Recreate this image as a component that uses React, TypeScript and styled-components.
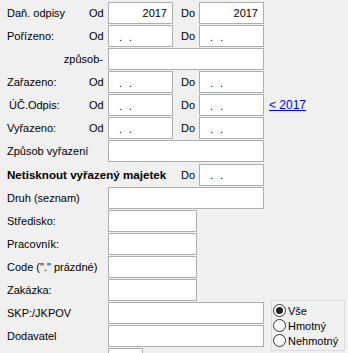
import React from 'react'
import styled, { createGlobalStyle } from 'styled-components'

const GlobalStyle = createGlobalStyle`
	html, body {
		margin: 0;
		padding: 0;
		background: #f0f0f0;
	}
	body {
		font-family: "Liberation Sans", Arial, sans-serif;
		font-size: 11px;
		color: #000;
	}
`

const Form = styled.div`
	padding-top: 2px;
	width: 348px;
	height: 353px;
	overflow: hidden;
`

const Row = styled.div<{ $tall?: boolean }>`
	display: grid;
	grid-template-columns: 89px 19px 65px 26px 65px auto;
	align-items: center;
	height: ${(p) => (p.$tall ? 23 : 22)}px;
	margin-bottom: 1px;
`

const Label = styled.div<{ $span?: number; $indent?: number; $bold?: boolean; $right?: boolean }>`
	grid-column: span ${(p) => p.$span ?? 1};
	padding-left: ${(p) => (p.$right ? 0 : p.$indent ?? 7)}px;
	padding-right: ${(p) => (p.$right ? 5 : 0)}px;
	text-align: ${(p) => (p.$right ? 'right' : 'left')};
	font-weight: ${(p) => (p.$bold ? 'bold' : 'normal')};
	font-size: ${(p) => (p.$bold ? '11.6px' : '11px')};
	white-space: nowrap;
`

const Suffix = styled.div<{ $pad?: number }>`
	text-align: right;
	padding-right: ${(p) => p.$pad ?? 5}px;
	white-space: nowrap;
`

const Field = styled.div<{ $span?: number; $width?: number; $align?: 'left' | 'right' }>`
	grid-column: span ${(p) => p.$span ?? 1};
	${(p) => (p.$width ? `width: ${p.$width}px; justify-self: start;` : '')}
	height: 22px;
	box-sizing: border-box;
	border: 1px solid #adadad;
	background: #fff;
	display: flex;
	align-items: center;
	justify-content: ${(p) => (p.$align === 'right' ? 'flex-end' : 'flex-start')};
	padding: 0 5px 0 10px;
	white-space: pre;
`

const DateMask = styled.span`
	letter-spacing: 2px;
	padding-top: 1px;
`

const YearLink = styled.a`
	padding-left: 5px;
	color: #0000ff;
	text-decoration: underline;
	font-size: 12px;
	white-space: nowrap;
	cursor: pointer;
`

const Bottom = styled.div`
	display: flex;
	align-items: flex-start;
`

const Stack = styled.div`
	width: 264px;
`

const RadioGroup = styled.div`
	margin-left: 7px;
	margin-top: -2px;
	width: 74px;
	height: 51px;
	box-sizing: border-box;
	border: 1px solid #dcdcdc;
	padding: 2px 1px;
	display: flex;
	flex-direction: column;
`

const RadioItem = styled.label`
	display: flex;
	align-items: center;
	gap: 2px;
	height: 15px;
	font-size: 11px;
	white-space: nowrap;
`

const RadioCircle = styled.span<{ $checked?: boolean }>`
	width: 13px;
	height: 13px;
	box-sizing: border-box;
	border: 1px solid #333;
	border-radius: 50%;
	background: #fff;
	display: flex;
	align-items: center;
	justify-content: center;
	flex-shrink: 0;
	&::after {
		content: '';
		display: ${(p) => (p.$checked ? 'block' : 'none')};
		width: 7px;
		height: 7px;
		border-radius: 50%;
		background: #222;
	}
`

const DateBox = () => (
	<Field>
		<DateMask>. .</DateMask>
	</Field>
)

const RangeRow = ({ label, indent, year, link }: { label: string; indent?: number; year?: string; link?: string }) => (
	<Row>
		<Label $indent={indent}>{label}</Label>
		<Suffix>Od</Suffix>
		{year ? <Field $align="right">{year}</Field> : <DateBox />}
		<Suffix $pad={4}>Do</Suffix>
		{year ? <Field $align="right">{year}</Field> : <DateBox />}
		{link && <YearLink>{link}</YearLink>}
	</Row>
)

const TextRow = ({ label, width }: { label: string; width?: number }) => (
	<Row>
		<Label $span={2}>{label}</Label>
		<Field $span={3} $width={width} />
	</Row>
)

const options = [
	{ label: 'Vše', checked: true },
	{ label: 'Hmotný' },
	{ label: 'Nehmotný' }
]

export default function App() {
	return (
		<>
			<GlobalStyle />
			<Form>
				<RangeRow label="Daň. odpisy" year="2017" />
				<RangeRow label="Pořízeno:" />
				<Row>
					<Label $span={2} $right>
						způsob-
					</Label>
					<Field $span={3} />
				</Row>
				<RangeRow label="Zařazeno:" />
				<RangeRow label="ÚČ.Odpis:" indent={9} link="< 2017" />
				<RangeRow label="Vyřazeno:" />
				<TextRow label="Způsob vyřazení" />
				<Row $tall>
					<Label $span={3} $bold>
						Netisknout vyřazený majetek
					</Label>
					<Suffix $pad={4}>Do</Suffix>
					<DateBox />
				</Row>
				<TextRow label="Druh (seznam)" />
				<TextRow label="Středisko:" width={89} />
				<TextRow label="Pracovník:" width={89} />
				<TextRow label='Code ("." prázdné)' width={89} />
				<TextRow label="Zakázka:" width={89} />
				<Bottom>
					<Stack>
						<TextRow label="SKP:/JKPOV" />
						<TextRow label="Dodavatel" />
						<TextRow label="" width={35} />
					</Stack>
					<RadioGroup>
						{options.map((o) => (
							<RadioItem key={o.label}>
								<RadioCircle $checked={o.checked} />
								{o.label}
							</RadioItem>
						))}
					</RadioGroup>
				</Bottom>
			</Form>
		</>
	)
}
